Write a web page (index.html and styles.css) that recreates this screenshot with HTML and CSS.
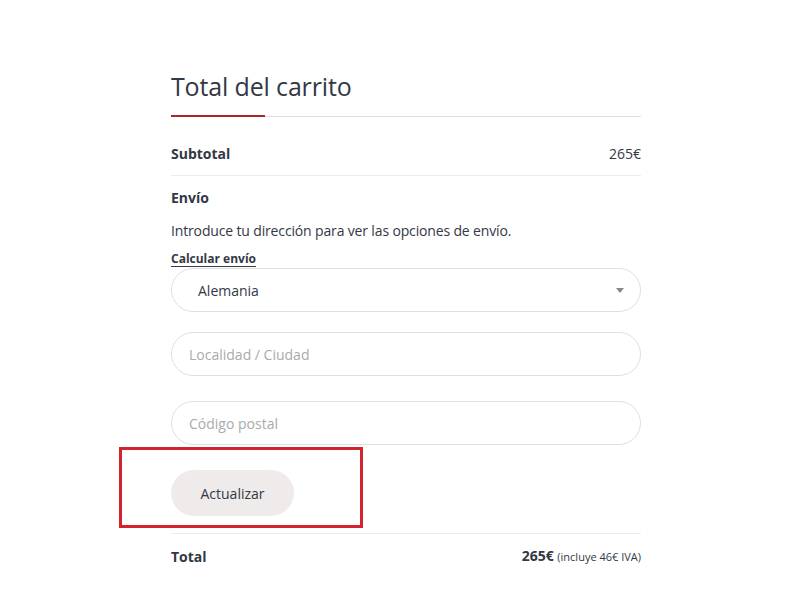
FILE: index.html
```html
<!DOCTYPE html>
<html lang="es">
<head>
    <meta charset="UTF-8">
    <meta name="viewport" content="width=device-width, initial-scale=1.0">
    <link rel="stylesheet" href="styles.css">
    <title>Total del carrito</title>
</head>
<body>
    <div class="cart-totals">
        <h2 class="cart-title">Total del carrito</h2>

        <div class="row subtotal">
            <span class="label">Subtotal</span>
            <span class="amount">265€</span>
        </div>

        <div class="shipping">
            <div class="label">Envío</div>
            <p class="shipping-note">Introduce tu dirección para ver las opciones de envío.</p>
            <a class="calc-link" href="#">Calcular envío</a>

            <div class="shipping-form">
                <div class="select-box">
                    <span>Alemania</span>
                    <span class="arrow"></span>
                </div>
                <input type="text" class="field city" placeholder="Localidad / Ciudad">
                <input type="text" class="field zip" placeholder="Código postal">
                <div class="button-row">
                    <button class="update-btn">Actualizar</button>
                    <!-- highlight around the button -->
                    <div class="highlight"></div>
                </div>
            </div>
        </div>

        <div class="row total">
            <span class="label">Total</span>
            <span class="total-amount"><strong>265€</strong> <small>(incluye 46€ IVA)</small></span>
        </div>
    </div>
</body>
</html>
```

FILE: styles.css
```css
body {
    margin: 0;
    background: #fff;
    font-family: "Open Sans", "Liberation Sans", sans-serif;
    color: #333844;
  }

  .cart-totals {
    width: 470px;
    margin-left: 171px;
    padding-top: 68px;
  }

  .cart-title {
    position: relative;
    margin: 0;
    font-size: 25px;
    font-weight: 400;
    letter-spacing: -0.15px;
    line-height: 36px;
    padding-bottom: 12px;
    border-bottom: 1px solid #dedede;
  }

  .cart-title::after {
    content: "";
    position: absolute;
    left: 0;
    bottom: -1px;
    width: 94px;
    height: 2px;
    background: #a5262e;
  }

  .row {
    display: flex;
    justify-content: space-between;
    align-items: center;
    font-size: 14px;
    line-height: 20px;
  }

  .label {
    font-weight: 700;
    font-size: 14px;
    line-height: 20px;
  }

  .subtotal {
    padding: 27px 0 11px;
    border-bottom: 1px solid #ececec;
  }

  .shipping {
    padding-top: 12px;
  }

  .shipping-note {
    margin: 13px 0 0;
    font-size: 14px;
    letter-spacing: -0.15px;
    line-height: 20px;
  }

  .calc-link {
    display: inline-block;
    margin-top: 10px;
    font-size: 12px;
    font-weight: 700;
    line-height: 15px;
    color: #333844;
    text-decoration: none;
    border-bottom: 1px solid #333844;
  }

  .shipping-form {
    display: flex;
    flex-direction: column;
  }

  .select-box {
    display: flex;
    justify-content: space-between;
    align-items: center;
    height: 42px;
    border: 1px solid #e0e0e0;
    border-radius: 22px;
    padding: 0 16px 0 26px;
    font-size: 14px;
  }

  .arrow {
    width: 0;
    height: 0;
    border-left: 4px solid transparent;
    border-right: 4px solid transparent;
    border-top: 5px solid #888;
  }

  .field {
    height: 44px;
    box-sizing: border-box;
    border: 1px solid #e0e0e0;
    border-radius: 22px;
    padding: 0 17px;
    font-family: inherit;
    font-size: 14px;
    color: #333844;
    outline: none;
  }

  .field::placeholder {
    color: #aaa;
  }

  .city {
    margin-top: 20px;
  }

  .zip {
    margin-top: 25px;
  }

  .button-row {
    position: relative;
    margin-top: 25px;
    padding-bottom: 17px;
    border-bottom: 1px solid #ececec;
  }

  .update-btn {
    width: 123px;
    height: 46px;
    border: none;
    border-radius: 23px;
    background: #efebeb;
    font-family: inherit;
    font-size: 14px;
    color: #333844;
    cursor: pointer;
  }

  .highlight {
    position: absolute;
    left: -52px;
    top: -23px;
    width: 238px;
    height: 75px;
    border: 3px solid #d2232f;
  }

  .total {
    padding-top: 12px;
  }

  .total-amount strong {
    font-size: 14px;
  }

  .total-amount small {
    font-size: 11px;
  }
```
